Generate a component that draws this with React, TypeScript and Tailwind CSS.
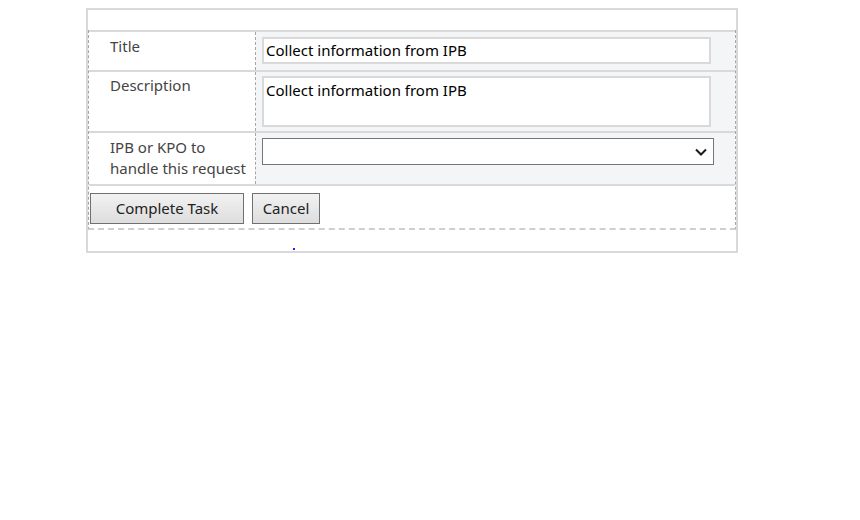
import React from "react";

const font = { fontFamily: '"Noto Sans", "Open Sans", sans-serif' };

export default function App() {
  return (
    <div className="w-[860px] h-[520px] bg-white relative pt-[8px]" style={font}>
      {/* Outer form frame */}
      <div className="ml-[86px] w-[652px] h-[245px] border-2 border-[#d9d9d9] pt-[20px]">
        <div className="border-x border-b-2 border-dashed border-x-[#a6a6a6] border-b-[#cfcfcf]">
          {/* Title row */}
          <div className="flex border-t-2 border-[#d9d9d9] h-[40px]">
            <div className="w-[167px] shrink-0 border-r border-dashed border-[#a6a6a6] pl-[21px] pt-[4px] text-[15px] leading-[20px] text-[#444]">
              Title
            </div>
            <div className="flex-1 bg-[#f4f5f6] pl-[6px] pt-[5px]">
              <div className="w-[449px] h-[27px] border-2 border-[#d9d9d9] bg-white pl-[2px] text-[15px] leading-[22px] text-black">
                Collect information from IPB
              </div>
            </div>
          </div>

          {/* Description row */}
          <div className="flex border-t-2 border-[#d9d9d9] h-[61px]">
            <div className="w-[167px] shrink-0 border-r border-dashed border-[#a6a6a6] pl-[21px] pt-[3px] text-[15px] leading-[20px] text-[#444]">
              Description
            </div>
            <div className="flex-1 bg-[#f4f5f6] pl-[6px] pt-[4px]">
              <div className="w-[449px] h-[51px] border-2 border-[#d9d9d9] bg-white pl-[2px] pt-[1px] text-[15px] leading-[22px] text-black">
                Collect information from IPB
              </div>
            </div>
          </div>

          {/* Handler row */}
          <div className="flex border-t-2 border-[#d9d9d9] h-[53px]">
            <div className="w-[167px] shrink-0 border-r border-dashed border-[#a6a6a6] pl-[21px] pt-[4px] text-[15px] leading-[21px] text-[#444]">
              IPB or KPO to
              <br />
              handle this request
            </div>
            <div className="flex-1 bg-[#f4f5f6] pl-[6px] pt-[5px]">
              <div className="w-[452px] h-[27px] border border-[#767676] bg-white flex items-center justify-end pr-[6px]">
                <svg width="12" height="8" viewBox="0 0 12 8" fill="none">
                  <path d="M1 1.5 L6 6.5 L11 1.5" stroke="#1a1a1a" strokeWidth="2" />
                </svg>
              </div>
            </div>
          </div>

          {/* Buttons row */}
          <div className="flex gap-[8px] border-t-2 border-[#d9d9d9] h-[44px] pl-[1px] pt-[7px]">
            <button className="w-[154px] h-[31px] border border-[#707070] bg-gradient-to-b from-[#f2f2f2] to-[#dddddd] text-[15px] text-[#222]">
              Complete Task
            </button>
            <button className="w-[68px] h-[31px] border border-[#707070] bg-gradient-to-b from-[#f2f2f2] to-[#dddddd] text-[15px] text-[#222]">
              Cancel
            </button>
          </div>
        </div>
      </div>
      <div className="absolute left-[293px] top-[248px] w-[2px] h-[2px] bg-[#2020ff]" />
    </div>
  );
}
